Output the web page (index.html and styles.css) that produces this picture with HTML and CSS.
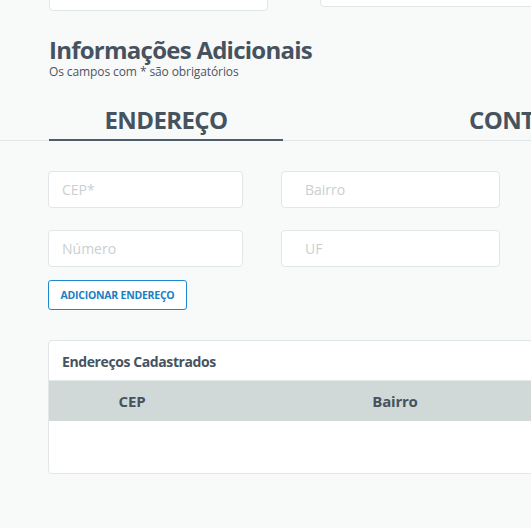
FILE: index.html
```html
<!DOCTYPE html>
<html lang="pt-BR">
<head>
<meta charset="utf-8">
<title>Informações Adicionais</title>
<link rel="stylesheet" href="styles.css">
</head>
<body>
<div class="page">
  <div class="top-row">
    <div class="field top-left"></div>
    <div class="field top-right"></div>
  </div>

  <div class="heading">
    <h1 class="title">Informações Adicionais</h1>
    <p class="subtitle">Os campos com * são obrigatórios</p>
  </div>

  <div class="tabs">
    <div class="tab active">ENDEREÇO</div>
    <div class="tab second">CONTATO</div>
  </div>

  <div class="form">
    <div class="grid">
      <div class="field input"><span class="ph">CEP*</span></div>
      <div class="field input wide"><span class="ph">Bairro</span></div>
      <div class="field input"><span class="ph">Número</span></div>
      <div class="field input wide"><span class="ph">UF</span></div>
    </div>
    <button class="btn">ADICIONAR ENDEREÇO</button>

    <div class="card">
      <div class="card-title">Endereços Cadastrados</div>
      <div class="thead">
        <div class="th c1">CEP</div>
        <div class="th c2">Bairro</div>
      </div>
      <div class="tbody"></div>
    </div>
  </div>
</div>
</body>
</html>
```

FILE: styles.css
```css
html, body {
  margin: 0;
  padding: 0;
  background: #f8f9f9;
  overflow: hidden;
}
body {
  font-family: "Open Sans", "Liberation Sans", sans-serif;
  color: #46535f;
  width: 531px;
  height: 528px;
}
.page {
  width: 531px;
  overflow: hidden;
}
.top-row {
  display: flex;
  align-items: flex-start;
  padding-left: 49px;
  margin-top: -26px;
}
.field {
  background: #fff;
  border: 1px solid #e2e6e8;
  border-radius: 4px;
  box-sizing: border-box;
}
.top-left {
  flex: none;
  width: 219px;
  height: 37px;
}
.top-right {
  flex: none;
  width: 260px;
  height: 33px;
  margin-left: 52px;
}
.heading {
  padding-left: 49px;
  margin-top: 25px;
}
.title {
  margin: 0;
  font-size: 24px;
  line-height: 28px;
  font-weight: 700;
  letter-spacing: -0.75px;
  color: #46535f;
}
.subtitle {
  margin: 0;
  font-size: 12px;
  line-height: 15px;
  letter-spacing: -0.1px;
  color: #4b5662;
}
.tabs {
  display: flex;
  margin-top: 21px;
  border-bottom: 1px solid #e3e6e8;
  height: 40px;
}
.tab {
  font-size: 24px;
  font-weight: 700;
  line-height: 40px;
  letter-spacing: -0.6px;
  box-sizing: border-box;
  flex: none;
  color: #46535f;
}
.tab.active {
  width: 234px;
  margin-left: 49px;
  text-align: center;
  border-bottom: 2px solid #4f5e6c;
  height: 41px;
}
.tab.second {
  padding-left: 186px;
}
.form {
  padding-left: 48px;
  padding-top: 30px;
}
.grid {
  display: grid;
  grid-template-columns: 195px 219px;
  column-gap: 38px;
  row-gap: 22px;
}
.input {
  height: 37px;
  display: flex;
  align-items: center;
  padding-left: 13px;
}
.input.wide {
  padding-left: 23px;
}
.ph {
  font-size: 14px;
  color: #c9cfd3;
}
.btn {
  display: block;
  margin-top: 13px;
  width: 139px;
  height: 30px;
  box-sizing: border-box;
  border: 1.5px solid #1c88d1;
  border-radius: 3px;
  background: #fff;
  color: #1a7fc4;
  font-family: "Open Sans", "Liberation Sans", sans-serif;
  font-size: 10.5px;
  font-weight: 700;
  letter-spacing: -0.25px;
  padding: 0;
}
.card {
  margin-top: 30px;
  width: 560px;
  background: #fff;
  border: 1px solid #e2e6e8;
  border-radius: 4px;
  box-sizing: border-box;
  overflow: hidden;
}
.card-title {
  height: 39px;
  padding-left: 13px;
  font-size: 14px;
  font-weight: 700;
  line-height: 42px;
  letter-spacing: -0.4px;
  border-bottom: 1px solid #e5e8ea;
}
.thead {
  display: grid;
  grid-template-columns: 166px 360px;
  background: #d0d9d8;
  height: 40px;
}
.th {
  text-align: center;
  font-size: 15px;
  font-weight: 700;
  line-height: 40px;
  letter-spacing: -0.2px;
}
.tbody {
  height: 52px;
}
```
